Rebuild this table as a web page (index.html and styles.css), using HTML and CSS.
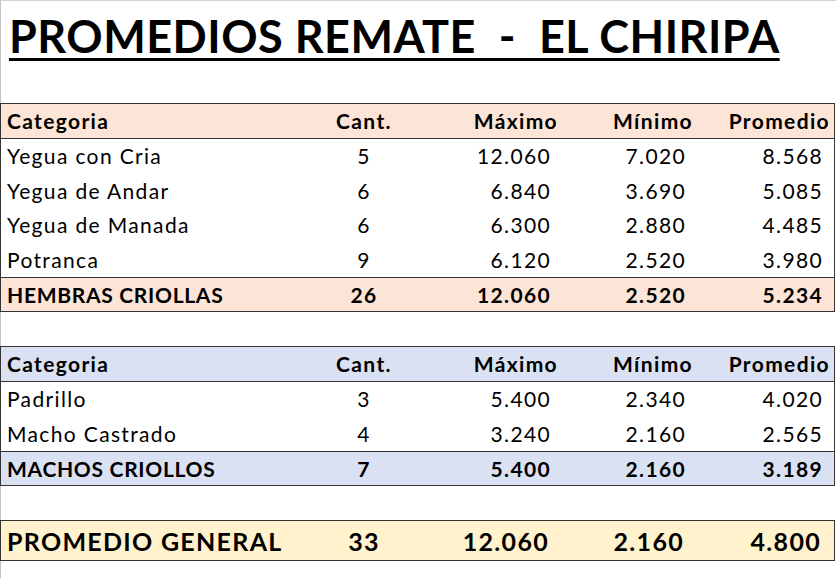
FILE: index.html
```html
<!DOCTYPE html>
<html lang="es">
<head>
<meta charset="utf-8">
<title>Promedios Remate - El Chiripa</title>
<link rel="stylesheet" href="styles.css">
</head>
<body>
<div class="sheet">
  <h1 class="title">PROMEDIOS REMATE  -  EL CHIRIPA</h1>

  <div class="table hembras">
    <div class="row head">
      <div class="c cat">Categoria</div><div class="c cant">Cant.</div><div class="c hn">Máximo</div><div class="c hn">Mínimo</div><div class="c hn">Promedio</div>
    </div>
    <div class="row">
      <div class="c cat">Yegua con Cria</div><div class="c cant">5</div><div class="c num">12.060</div><div class="c num">7.020</div><div class="c num">8.568</div>
    </div>
    <div class="row">
      <div class="c cat">Yegua de Andar</div><div class="c cant">6</div><div class="c num">6.840</div><div class="c num">3.690</div><div class="c num">5.085</div>
    </div>
    <div class="row">
      <div class="c cat">Yegua de Manada</div><div class="c cant">6</div><div class="c num">6.300</div><div class="c num">2.880</div><div class="c num">4.485</div>
    </div>
    <div class="row">
      <div class="c cat">Potranca</div><div class="c cant">9</div><div class="c num">6.120</div><div class="c num">2.520</div><div class="c num">3.980</div>
    </div>
    <div class="row total">
      <div class="c cat">HEMBRAS CRIOLLAS</div><div class="c cant">26</div><div class="c num">12.060</div><div class="c num">2.520</div><div class="c num">5.234</div>
    </div>
  </div>

  <div class="table machos">
    <div class="row head">
      <div class="c cat">Categoria</div><div class="c cant">Cant.</div><div class="c hn">Máximo</div><div class="c hn">Mínimo</div><div class="c hn">Promedio</div>
    </div>
    <div class="row">
      <div class="c cat">Padrillo</div><div class="c cant">3</div><div class="c num">5.400</div><div class="c num">2.340</div><div class="c num">4.020</div>
    </div>
    <div class="row">
      <div class="c cat">Macho Castrado</div><div class="c cant">4</div><div class="c num">3.240</div><div class="c num">2.160</div><div class="c num">2.565</div>
    </div>
    <div class="row total">
      <div class="c cat">MACHOS CRIOLLOS</div><div class="c cant">7</div><div class="c num">5.400</div><div class="c num">2.160</div><div class="c num">3.189</div>
    </div>
  </div>

  <div class="table general">
    <div class="row grand">
      <div class="c cat">PROMEDIO GENERAL</div><div class="c cant">33</div><div class="c num">12.060</div><div class="c num">2.160</div><div class="c num">4.800</div>
    </div>
  </div>
</div>
</body>
</html>
```

FILE: styles.css
```css
* { box-sizing: border-box; }
html, body { margin: 0; padding: 0; background: #fff; }
body {
  font-family: "Lato", "Open Sans", sans-serif;
  color: #000;
  width: 840px;
  height: 578px;
  overflow: hidden;
}
.sheet {
  border-top: 1px solid #d4d4d4;
  border-left: 1px solid #c4c4c4;
  height: 578px;
  width: 836px;
  display: flex;
  flex-direction: column;
}
.title {
  margin: 0;
  height: 102px;
  padding: 9px 0 0 8px;
  font-size: 45px;
  font-weight: 700;
  line-height: 52px;
  letter-spacing: 0.5px;
  white-space: pre;
  text-decoration: underline;
  text-decoration-thickness: 3px;
  text-underline-offset: 5px;
  color: #000;
}
.table {
  width: 835px;
  margin-left: -1px;
  border: 1.5px solid #333;
}
.hembras { margin-bottom: 34px; }
.machos { margin-bottom: 34px; }
.row {
  display: grid;
  grid-template-columns: 310px 105px 146px 135px 1fr;
  height: 34.5px;
  align-items: center;
  font-size: 21px;
  letter-spacing: 1.35px;
}
.head { font-weight: 700; border-bottom: 1.5px solid #333; }
.total { font-weight: 700; border-top: 1.5px solid #333; }
.total .cat { letter-spacing: 0.7px; }
.hembras .head, .hembras .total { background: #fce4d6; }
.machos .head, .machos .total { background: #d9e1f2; }
.general { background: #fff2cc; }
.grand { height: 39px; font-size: 25px; font-weight: 700; letter-spacing: 1.3px; }
.c { white-space: nowrap; }
.cat { padding-left: 6px; }
.cant { text-align: center; padding-left: 1px; }
.hn { text-align: right; padding-right: 4px; }
.num { text-align: right; padding-right: 11px; }
.grand .num { padding-right: 13px; }
```
